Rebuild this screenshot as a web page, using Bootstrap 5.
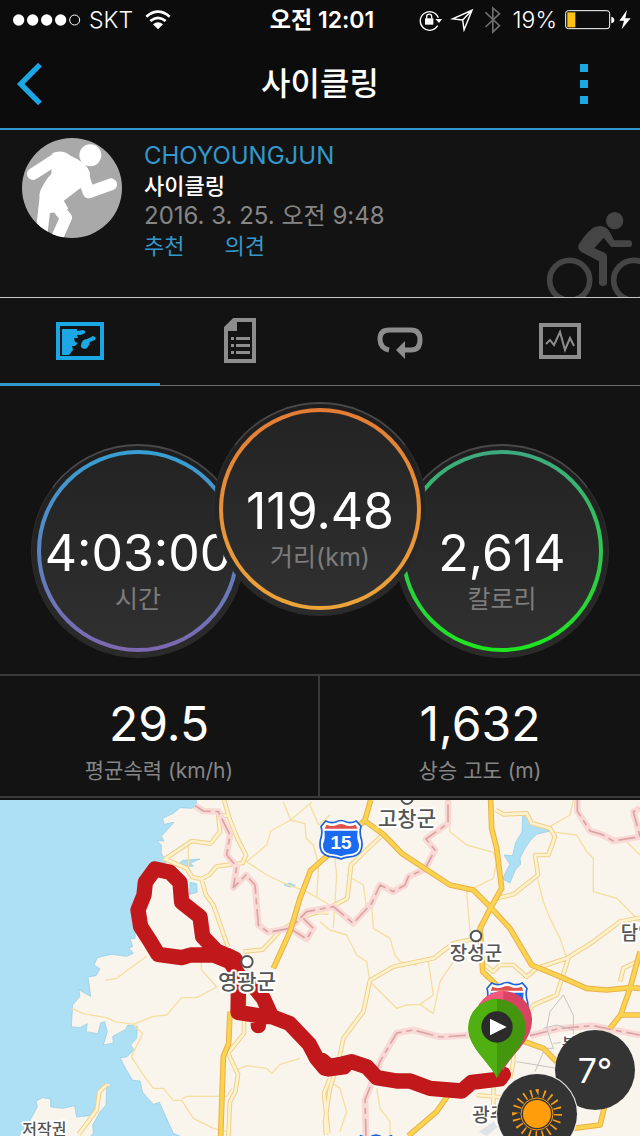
<!DOCTYPE html>
<html lang="ko" data-bs-theme="dark">
<head>
<meta charset="utf-8">
<meta name="viewport" content="width=device-width, initial-scale=1">
<title>사이클링</title>
<link href="https://cdn.jsdelivr.net/npm/bootstrap@5.3.0/dist/css/bootstrap.min.css" rel="stylesheet">
<style>
  :root { --accent: #1ba6e4; --accent-dim: #3398cc; --muted: #868686; --rule: #393939; }
  body { background: #131313; color: #fff; font-family: Inter, "Noto Sans CJK KR", sans-serif; }
  svg { display: block; flex: none; }
  .top-area { background: #0c0c0c; border-bottom: 2px solid var(--accent-dim); }
  .status-bar { height: 40px; padding: 0 9px 0 13px; font-size: 23px; line-height: 40px; }
  .status-side { flex: 1 1 0; }
  .title-bar { height: 88px; padding: 0 16px; }
  .title-bar h1 { font-size: 32px; line-height: 40px; font-weight: 500; }
  .bare-btn { background: none; border: 0; padding: 0; width: 60px; }
  .menu-btn { padding-left: 16px; }
  .profile { height: 168px; border-bottom: 1px solid #c8c8c8; padding-left: 22px; }
  .profile-text { font-size: 22px; line-height: 30px; padding-top: 11px; margin-left: 22px; }
  .profile-text .user-name, .profile-text .muted-text { font-size: 24px; }
  .profile-text a, .user-name { color: var(--accent-dim); text-decoration: none; }
  .muted-text { color: var(--muted); }
  .tab-strip { height: 88px; border-bottom: 1px solid #6c6c6c; }
  .tab-strip a { color: #8d8d8d; margin-bottom: -1px; border-bottom: 3px solid transparent; }
  .tab-strip a.active { color: var(--accent); border-color: var(--accent-dim); }
  .dials { height: 288px; padding-top: 16px; }
  .dial { width: 214px; height: 214px; padding: 4px 5px 5px; border-radius: 50%; margin: 42px -16px 0;
    background: linear-gradient(#1e1e1e, #2b2b2b); border: 1px solid #2c2c2c; border-top: 2px solid #4a4848; flex: none; }
  .dial-main { margin-top: 0; z-index: 1; position: relative; }
  .dial-face { height: 100%; border: 4px solid transparent; border-radius: 50%; padding-top: 71px; white-space: nowrap;
    background: linear-gradient(#232323, #303030) padding-box, linear-gradient(var(--from), var(--to)) border-box; }
  .dial-time { --from: #379fd2; --to: #7e68b0; }
  .dial-main { --from: #e27c35; --to: #eca43b; }
  .dial-cal { --from: #3ea980; --to: #1ee61e; }
  .dial-value { font-size: 50px; line-height: 56px; }
  .dial-label { font-size: 25px; line-height: 36px; color: #7c7c7c; }
  .stats { border-top: 2px solid var(--rule); border-bottom: 2px solid var(--rule); margin-bottom: 2px; }
  .stat { height: 120px; padding-top: 20px; }
  .stat:first-child { border-right: 2px solid var(--rule); }
  .stat-value { font-size: 48px; line-height: 56px; }
  .stat-label { font-size: 21px; line-height: 38px; color: var(--muted); }
  .map-area { background: #f9f5ed; }
  .map-area text { font-family: "Noto Sans CJK KR", sans-serif; font-weight: 500; fill: #555; stroke: #fff; stroke-width: 12; stroke-linejoin: round; paint-order: stroke; }
  .map-area .route-no { font-family: "Liberation Sans", sans-serif; font-weight: 700; fill: #fff; stroke: none; }
  .bubble { width: 80px; height: 80px; border-radius: 50%; background: #343434; color: #fff; font-size: 34px; }
  .bubble-temp { right: 5px; bottom: 26px; }
  .bubble-sun { right: 63px; bottom: -18px; box-shadow: 0 0 0 1px #eee; }
</style>
</head>
<body>
<div class="d-flex flex-column min-vh-100">
  <header class="top-area">
    <div class="status-bar d-flex align-items-center">
      <div class="status-side d-flex align-items-center">
        <svg width="68" height="14" viewBox="0 0 204 42" fill="#fff"><circle cx="17" cy="21" r="17"/><circle cx="59" cy="21" r="17"/><circle cx="101" cy="21" r="17"/><circle cx="143" cy="21" r="17"/><circle cx="185" cy="21" r="15" fill="none" stroke="#fff" stroke-width="3"/></svg>
        <span class="fw-light ms-2">SKT</span>
        <svg class="ms-2 ps-1" width="30" height="20" viewBox="0 0 78 60" fill="none" stroke="#fff" stroke-width="8"><path d="M4 20Q39-10 74 20M16 33Q39 14 62 33"/><path d="M24 43Q39 31 54 43L39 58Z" fill="#fff" stroke="none"/></svg>
      </div>
      <span class="fw-semibold">오전 12:01</span>
      <div class="status-side d-flex align-items-center justify-content-end">
        <svg width="24" height="22" viewBox="288 28 72 66" fill="none" stroke="#fff" stroke-width="4"><path d="M347 78A28 28 0 1 1 349 54"/><path d="M340 58h20l-9 12z" fill="#fff" stroke="none"/><path d="M309 56h25v19h-25z" fill="#fff" stroke="none"/><path d="M314 57v-6a7 7 0 0 1 15 0v6"/></svg>
        <svg class="ms-2" width="26" height="24" viewBox="394 26 72 66" fill="none" stroke="#fff" stroke-width="4"><path d="M455 32L401 56L429 59L433 86Z M455 32L429 59"/></svg>
        <svg class="ms-2" width="17" height="28" viewBox="490 20 50 84" fill="none" stroke="#6d6d6d" stroke-width="5"><path d="M494 39L536 79L516 98V26L536 43L494 83"/></svg>
        <span class="ms-2 ps-1 fw-light">19%</span>
        <svg class="ms-2" width="50" height="20" viewBox="731 32 150 60"><rect x="733" y="34" width="132" height="54" rx="8" fill="none" stroke="#fff" stroke-width="3"/><path d="M738 39h24v45h-24z" fill="#fdc20f"/><path d="M870 52q9 2 9 10t-9 10z" fill="#fff"/></svg>
        <svg class="ms-1" width="12" height="20" viewBox="895 31 36 60" fill="#fff"><path d="M919 31L896 63h14l-7 26 27-33h-16z"/></svg>
      </div>
    </div>
    <div class="title-bar d-flex align-items-center justify-content-between">
      <button class="bare-btn" aria-label="뒤로"><svg width="28" height="44" viewBox="48 186 84 132" fill="none" stroke="#1ba6e4" stroke-width="16"><path d="M120 194L62 252L120 310"/></svg></button>
      <h1 class="m-0">사이클링</h1>
      <button class="bare-btn menu-btn" aria-label="메뉴"><svg width="8" height="40" viewBox="0 0 8 40" fill="#1ba6e4"><path d="M0 0h8v8H0zM0 16h8v8H0zM0 32h8v8H0z"/></svg></button>
    </div>
  </header>

  <section class="profile d-flex">
    <svg class="mt-2" width="100" height="100" viewBox="66 39 300 300">
      <clipPath id="face"><circle cx="216" cy="189" r="150"/></clipPath>
      <g clip-path="url(#face)"><path fill="#a9a9a9" d="M66 39h300v300H66z"/>
      <g fill="#fff" stroke="#fff" stroke-linejoin="round" stroke-linecap="round"><circle cx="271" cy="91" r="33" stroke="none"/><path d="M99 147L172 100" fill="none" stroke-width="36"/><path d="M160 88Q186 76 210 96Q258 116 266 145Q266 178 236 188L186 226L200 250L140 262Q112 220 128 192Q140 166 158 148Z" stroke-width="8"/><path d="M247 145L266 202L333 178M136 225L124 330M164 236L198 278L168 345" fill="none" stroke-width="36"/></g></g>
    </svg>
    <div class="profile-text">
      <div class="user-name">CHOYOUNGJUN</div>
      <div class="fw-medium">사이클링</div>
      <div class="muted-text">2016. 3. 25. 오전 9:48</div>
      <div class="d-flex"><a href="#like" class="me-4 pe-3">추천</a><a href="#comments">의견</a></div>
    </div>
    <svg class="ms-auto align-self-end" width="94" height="87" viewBox="198 60 282 261" fill="#454545"><circle cx="404" cy="92" r="26"/><g fill="none" stroke="#454545" stroke-width="17"><circle cx="269" cy="271" r="60"/><circle cx="461" cy="271" r="60"/></g><path d="M296 164Q318 128 340 113Q372 98 390 127L402 151H449Q456 152 456 161T449 171H394L371 143L343 175L371 187Q381 191 381 200V280Q380 288 369 288T357 280V214L306 187Q290 178 296 164Z"/></svg>
  </section>

  <nav class="tab-strip d-flex">
    <a href="#overview" class="active flex-fill w-25 d-flex align-items-center justify-content-center" aria-label="개요"><svg width="48" height="38" viewBox="0 0 48 38" fill="currentColor"><path fill="none" stroke="currentColor" stroke-width="4" d="M2 2h44v34H2z"/><path d="M6 7h15v2l6-1q3 1 2 3l-4 2h-4l1 3h-4l1 4 3 1-3 3-3 0 1 4-4 5H6z"/><path d="M25 23q1-6 6-6l6-3q4 1 2 4l-5 2q-2 7-5 7-5-1-4-4"/></svg></a>
    <a href="#details" class="flex-fill w-25 d-flex align-items-center justify-content-center" aria-label="세부사항"><svg width="32" height="45" viewBox="0 0 32 45" fill="currentColor"><path fill="none" stroke="currentColor" stroke-width="4" d="M2 10L10 2h20v41H2z"/><path d="M0 10L10 0h3v13H0zM12 19h14v3H12zM12 26h14v3H12zM12 33h14v3H12zM7 19h3v3H7zM7 26h3v3H7zM7 33h3v3H7z"/></svg></a>
    <a href="#laps" class="flex-fill w-25 d-flex align-items-center justify-content-center" aria-label="랩"><svg width="46" height="36" viewBox="0 -3 46 36"><path fill="none" stroke="currentColor" stroke-width="5" d="M12 24Q3 22 3 13T12 4H34Q43 4 43 14T34 24H27"/><path fill="currentColor" d="M19 24L28 15V33Z"/></svg></a>
    <a href="#charts" class="flex-fill w-25 d-flex align-items-center justify-content-center" aria-label="차트"><svg width="42" height="36" viewBox="0 0 42 36" fill="none" stroke="currentColor"><path stroke-width="4" d="M2 2h38v32H2z"/><path stroke-width="2" d="M7 21L11 17L15 22L21 9L26 27L31 15L35 23"/></svg></a>
  </nav>

  <section class="dials d-flex justify-content-center text-center">
    <div class="dial dial-time"><div class="dial-face"><div class="dial-value">4:03:00</div><div class="dial-label">시간</div></div></div>
    <div class="dial dial-main"><div class="dial-face"><div class="dial-value">119.48</div><div class="dial-label">거리(km)</div></div></div>
    <div class="dial dial-cal"><div class="dial-face"><div class="dial-value">2,614</div><div class="dial-label">칼로리</div></div></div>
  </section>

  <section class="stats row g-0 text-center">
    <div class="stat col-6"><div class="stat-value">29.5</div><div class="stat-label">평균속력 (km/h)</div></div>
    <div class="stat col-6"><div class="stat-value">1,632</div><div class="stat-label">상승 고도 (m)</div></div>
  </section>

  <section class="map-area position-relative overflow-hidden flex-fill">
    <svg class="w-100" viewBox="0 15 1920 1008" role="img" aria-label="경로 지도">
      <defs>
        <g id="shield"><path d="M-46-56Q-30-48-16-53Q0-62 16-53Q30-48 46-56L60-40Q54-20 62 2Q68 42 36 50Q12 52 0 58Q-12 52-36 50Q-68 42-62 2Q-54-20-60-40Z" fill="#fff" stroke="#1d62d8" stroke-width="5"/><path d="M-44-45Q-26-38-12-44Q0-50 12-44Q26-38 44-45L49-33H-49Z" fill="#e0504c"/><path d="M-50-27H50Q46-6 54 14Q56 38 34 42Q12 44 0 50Q-12 44-34 42Q-56 38-54 14Q-46-6-50-27Z" fill="#1b6bf0"/></g>
        <path id="lanes" d="M672 15L690 75L712 130L738 180L728 204L650 214L628 240L604 252L576 246L560 220L495 192L575 138L632 146L660 110L655 62H684M604 250L618 300L640 330L684 455M730 470L788 464L840 408L910 365L975 345L1042 310L1053 210L1110 155L1150 118M732 600V715L684 775L714 838L706 890L690 920L685 1023M322 868L298 890L290 945L236 1018M990 850L972 895L985 1015M1488 45L1510 58L1580 55L1595 85L1650 100L1665 125L1645 180L1605 180L1614 240L1540 298L1490 310M930 350L985 352M1430 430L1360 445L1300 490L1180 515L1110 556L1090 650L1030 730L1018 790L990 880L975 980L978 1020M1440 500L1480 530L1500 510L1540 510L1580 545L1610 520L1700 490L1780 440L1860 380L1920 368M1705 490L1670 600L1600 630L1540 700M1540 710V800L1530 850M1480 860V940M1860 560L1870 520L1920 495M1430 900L1540 910"/>
        <path id="bounds" d="M585 32L610 48L655 50L690 120L680 180L710 215L700 278L738 240L765 270L775 390L805 412L870 400L920 350L1000 335L1060 385L1115 325L1140 270L1180 290L1215 270L1225 245L1275 222L1305 165L1278 132L1344 85V15M870 400L920 432L940 400L910 370M1732 15V48L1770 108L1805 118L1840 138L1920 125L1900 50L1920 40M1098 1023L1095 915L1140 800L1190 714L1240 705L1320 726L1420 720M1590 722L1680 700L1780 692L1840 705L1920 720"/>
        <path id="highways" d="M662 1023L670 785L686 745L690 650M820 520L870 410L900 310L932 226L990 175L1095 75L1112 15M1095 78L1150 118L1205 175L1350 270L1420 285L1470 335L1530 400L1595 510L1680 545L1760 580L1820 585L1890 578L1920 580M1472 15L1475 100L1490 160L1505 280L1474 335L1440 400L1448 530L1490 570M1920 470L1890 580L1862 660L1830 700M1862 660H1920M1560 735L1630 760L1670 800M1225 1023L1310 950L1345 900L1400 860M1720 1000L1800 990L1815 930"/>
      </defs>
      <!-- sea and lakes -->
      <g fill="#ade0f5" stroke="#8fc8e4" stroke-width="2">
        <path d="M-9 0H585L592 30L575 40L540 38L520 55L488 70L492 88L522 82L484 124L492 138L470 136L484 150V176L500 200L440 250L410 330L405 430L390 432L398 455L386 458L400 475L380 484L334 478L292 488L282 510L300 522L288 542L264 546L272 604L236 584L240 604L218 630L214 695L240 698L262 686L258 710L294 716L302 684L314 680L322 710L310 750L340 744L338 724L376 704L384 690L412 694L410 730L392 750L402 764L380 786L360 788L380 826L398 856L420 858L428 892L460 928L478 922L520 1015L560 1032H264L280 1015L278 990L300 950L318 930L320 880L334 870L326 864L298 884L290 930L268 962L230 966L224 932L190 940L152 936V912L128 908L108 918L112 936L86 984L50 1032H-9Z"/>
        <path d="M530 210L550 196L600 192L572 204L580 214L546 214ZM570 262L590 266L592 292L568 298ZM852 270L870 264L886 272L870 276Z"/>
        <path d="M1568 58L1590 82L1650 108L1610 118L1592 135L1575 160L1560 190L1562 208L1546 225L1530 264L1508 252L1520 225L1530 208L1512 180L1538 182L1546 145L1566 110Z"/>
      </g>
      <path d="M1436 1010L1480 980L1500 990L1460 1023Z" fill="#dfe3e8"/>
      <!-- minor roads -->
      <g fill="none" stroke="#f6dea0" stroke-width="4" stroke-linejoin="round">
        <path d="M315 556L350 550L440 484M215 640L250 656L320 668L345 680L400 688L460 664L500 660L545 608L590 608L650 576L604 524V500M400 690L428 716L394 785L430 840L460 880L490 880L520 916L545 916L580 970L640 1000L680 1010M545 912L560 904H680L695 880M565 150V220M850 20L872 75L935 22M872 75L812 108L800 150L740 200L800 240L860 268L920 290L990 330M872 75L915 86L918 130L940 150L956 210L950 310M700 830L740 812L800 820L815 836L840 808L900 790"/>
        <path d="M930 30L956 90L990 60M1344 20L1350 110L1400 150L1480 172L1490 200L1480 250L1400 290L1410 410M1115 330L1120 400L1170 430L1185 480L1200 500L1250 510M960 380L990 405L1040 420L1070 480L1100 500L1110 560L1150 600L1190 640L1220 630L1260 628L1300 656L1320 560L1380 470M1260 628L1300 600L1285 500M1650 110L1730 120L1760 170L1780 190V290L1850 310L1880 340L1920 380M1610 240L1630 320L1650 370L1680 430L1700 490M1720 15L1710 60L1640 100M1880 140L1920 180M1000 150L1010 240L1000 400M1040 240L1090 270L1100 340M990 860L1020 880L1040 950L1020 1010M1130 880L1140 940L1170 980L1170 1023"/>
      </g>
      <g fill="none" stroke-linejoin="round">
        <use href="#lanes" stroke="#efcf8b" stroke-width="14"/>
        <use href="#lanes" stroke="#fdf2cc" stroke-width="8"/>
        <use href="#bounds" stroke="#f8d9d6" stroke-width="20"/>
        <use href="#bounds" stroke="#dca3a3" stroke-width="5" stroke-dasharray="52 14 18 14"/>
        <path stroke="#c4c4c4" stroke-width="3" d="M1690 600L1650 650L1640 700L1660 760L1635 760L1605 830M1690 600L1720 660V740L1660 745M1550 800L1700 825M1720 705L1670 690L1630 700"/>
        <use href="#highways" stroke="#e9b04c" stroke-width="17"/>
        <use href="#highways" stroke="#fbd34f" stroke-width="11"/>
      </g>
      <!-- recorded ride -->
      <g fill="none" stroke="#c1181b" stroke-width="46" stroke-linejoin="round" stroke-linecap="round">
        <path d="M705 492L650 468L608 425L600 365L545 322L540 262L510 232L465 222L436 262L432 300L414 345L422 395L448 435L474 478L545 488L572 480L640 480L690 500L716 540L714 652L775 662L775 692M750 560L790 610L815 665L765 663M815 665L868 685L928 748L950 790L975 820L1055 800L1100 815L1130 848L1190 858L1230 858L1290 880L1385 888L1415 862L1500 852L1510 838"/>
        <path d="M684 486L704 500M965 800L985 818L1030 812" stroke-width="54"/>
      </g>
      <g fill="#fff" stroke="#555" stroke-width="6"><circle cx="741" cy="500" r="17"/><circle cx="1221" cy="10" r="17"/><circle cx="1428" cy="423" r="16"/></g>
      <g font-size="63">
        <text x="741" y="582" text-anchor="middle">영광군</text>
        <text x="1221" y="92" text-anchor="middle">고창군</text>
      </g>
      <g font-size="57">
        <text x="1428" y="495" text-anchor="middle">장성군</text>
        <text x="1862" y="436">담양</text>
        <text x="1417" y="982">광주</text>
      </g>
      <g font-size="48"><text x="67" y="1020">저작권</text><text x="1685" y="765">북</text></g>
      <use href="#shield" x="1023" y="134"/>
      <text class="route-no" x="1023" y="161" text-anchor="middle" font-size="57">15</text>
      <use href="#shield" x="1521" y="620"/>
      <use href="#shield" x="1128" y="1078"/>
      <!-- finish and start pins -->
      <path d="M1510 826C1480 770 1424 740 1424 674A86 86 0 0 1 1596 674C1596 740 1540 770 1510 826Z" fill="#d94463"/><path d="M1510 588A86 86 0 0 0 1424 674H1510Z" fill="#f5587c"/>
      <path d="M1491 850C1470 800 1405 760 1405 698A86 86 0 0 1 1577 698C1577 760 1512 800 1491 850Z" fill="#45960f"/><path d="M1491 850C1470 800 1405 760 1405 698A86 86 0 0 1 1491 612Z" fill="#50b012"/>
      <circle cx="1491" cy="696" r="47" fill="#2b2b2b"/><path d="M1470 671V721L1520 696Z" fill="#fff"/>
    </svg>
    <div class="bubble bubble-temp position-absolute d-flex align-items-center justify-content-center">7°</div>
    <div class="bubble bubble-sun position-absolute d-flex align-items-center justify-content-center">
      <svg width="52" height="52" viewBox="-26 -26 52 52" fill="none" stroke="#f99d14"><circle r="14" fill="#ff9d0a" stroke="none"/><circle r="16" stroke-width="1"/><circle r="21" stroke-width="8" pathLength="80" stroke-dasharray="1 3"/></svg>
    </div>
  </section>
</div>
<script src="https://cdn.jsdelivr.net/npm/bootstrap@5.3.0/dist/js/bootstrap.bundle.min.js"></script>
</body>
</html>
